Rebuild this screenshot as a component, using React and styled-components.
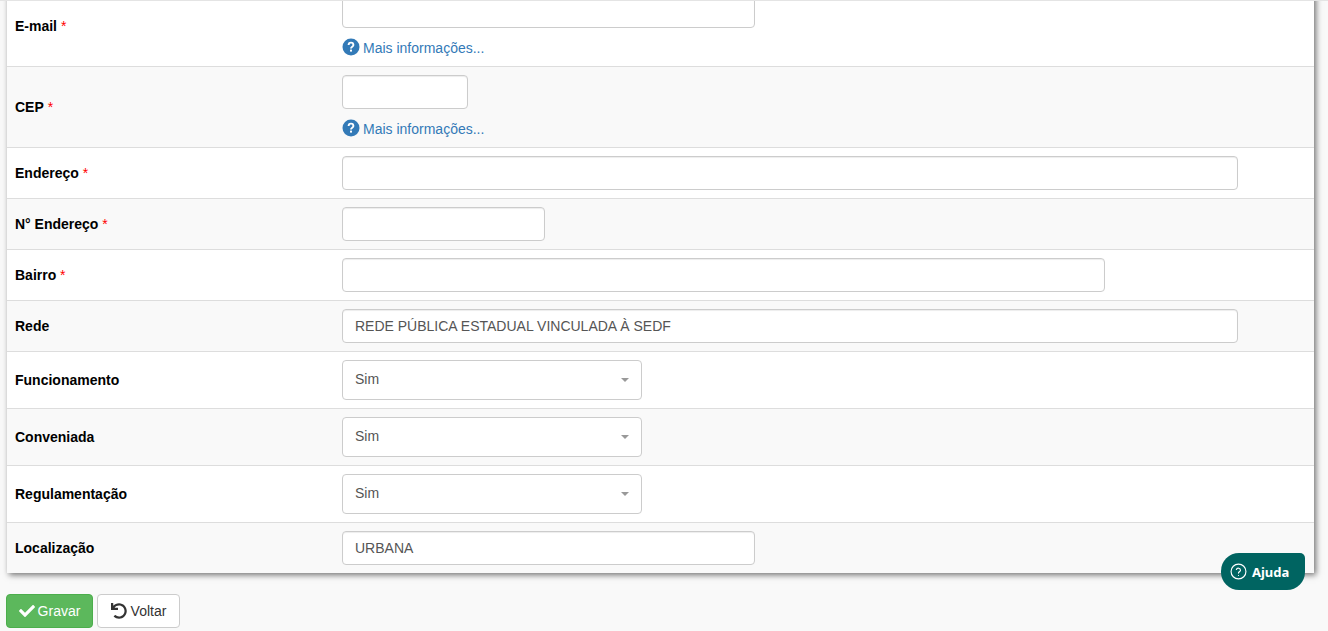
import React from 'react';
import styled, { createGlobalStyle } from 'styled-components';
import { FaCheck, FaUndo } from 'react-icons/fa';

const GlobalStyle = createGlobalStyle`
    html, body {
        margin: 0;
        padding: 0;
        height: 631px;
        overflow: hidden;
        background: #f9f9f9;
    }

    body {
        font-family: 'Liberation Sans', Arial, sans-serif;
        font-size: 14px;
        color: #333;
    }

    * {
        box-sizing: border-box;
    }
`;

const TopEdge = styled.div`
    position: fixed;
    top: 0;
    left: 0;
    right: 0;
    height: 1px;
    background: #e4e4e4;
    z-index: 2;
`;

const Page = styled.div`
    margin-top: -14px;
    padding: 0 14px 0 7px;
`;

const Panel = styled.div`
    background: #fff;
    box-shadow: 2px 2px 6px rgba(0, 0, 0, 0.55);
`;

const Row = styled.div`
    display: grid;
    grid-template-columns: 335px 1fr;
    align-items: center;
    padding: 8px 0;
    border-bottom: 1px solid #ddd;
    background: ${props => props.$striped ? '#f9f9f9' : '#fff'};

    &:last-child {
        border-bottom: 0;
    }
`;

const Label = styled.label`
    padding-left: 8px;
    font-weight: 700;
    font-size: 14px;
    color: #000;
`;

const Required = styled.span`
    color: #f00;
    font-weight: 400;
`;

const Input = styled.input`
    display: block;
    width: ${props => props.$width}px;
    height: 34px;
    padding: 6px 12px;
    border: 1px solid #ccc;
    border-radius: 4px;
    background: #fff;
    color: #555;
    font-family: inherit;
    font-size: 14px;
    box-shadow: inset 0 1px 1px rgba(0, 0, 0, 0.075);
`;

const SelectBox = styled.div`
    display: flex;
    align-items: center;
    justify-content: space-between;
    width: 300px;
    height: 40px;
    padding: 0 12px;
    border: 1px solid #ccc;
    border-radius: 4px;
    background: #fff;
    color: #555;
`;

const SelectValue = styled.span`
    margin-bottom: 2px;
`;

const Caret = styled.span`
    width: 0;
    height: 0;
    border-left: 4.5px solid transparent;
    border-right: 4.5px solid transparent;
    border-top: 4px solid #999;
`;

const HelpLink = styled.a`
    display: flex;
    align-items: center;
    gap: 3px;
    margin-top: 9px;
    height: 21px;
    color: #337ab7;
    font-size: 14px;
    text-decoration: none;

    & svg {
        margin-top: -2px;
    }
`;

const Actions = styled.div`
    display: flex;
    gap: 4px;
    margin-top: 21px;
    margin-left: -1px;
`;

const Button = styled.button`
    display: flex;
    align-items: center;
    justify-content: center;
    gap: ${props => props.$primary ? 3 : 4}px;
    width: ${props => props.$width}px;
    height: 34px;
    padding: 0;
    border: 1px solid ${props => props.$primary ? '#4cae4c' : '#ccc'};
    border-radius: 4px;
    background: ${props => props.$primary ? '#5cb85c' : '#fff'};
    color: ${props => props.$primary ? '#fff' : '#333'};
    font-family: inherit;
    font-size: 14px;

    & svg {
        width: 16px;
        height: 16px;
    }
`;

const HelpBubble = styled.div`
    position: fixed;
    left: 1221px;
    top: 553px;
    display: flex;
    align-items: center;
    gap: 5px;
    width: 84px;
    height: 37px;
    padding-left: 9px;
    border-radius: 18px 5px 18px 18px;
    background: #006461;
    color: #fff;
    font-family: 'Noto Sans', sans-serif;
    font-size: 13px;
    font-weight: 700;
`;

const HelpIcon = () => (
    <svg width="18" height="18" viewBox="0 0 18 18">
        <circle cx="9" cy="9" r="8.5" fill="#337ab7" />
        <path d="M6.6 7a2.4 2.4 0 0 1 4.8 0c0 1.7-2.4 1.7-2.4 3.4" fill="none" stroke="#fff" strokeWidth="1.9" />
        <rect x="8" y="11.6" width="2" height="2" fill="#fff" />
    </svg>
);

const fields = [
    { label: 'E-mail', required: true, width: 413, help: true },
    { label: 'CEP', required: true, width: 126, help: true },
    { label: 'Endereço', required: true, width: 896 },
    { label: 'N° Endereço', required: true, width: 203 },
    { label: 'Bairro', required: true, width: 763 },
    { label: 'Rede', width: 896, value: 'REDE PÚBLICA ESTADUAL VINCULADA À SEDF' },
    { label: 'Funcionamento', select: 'Sim' },
    { label: 'Conveniada', select: 'Sim' },
    { label: 'Regulamentação', select: 'Sim' },
    { label: 'Localização', width: 413, value: 'URBANA' },
];

const App = () => (
    <>
        <GlobalStyle />
        <TopEdge />
        <Page>
            <Panel>
                {fields.map((field, i) => (
                    <Row key={field.label} $striped={i % 2 === 1}>
                        <Label>
                            {field.label}
                            {field.required && <Required> *</Required>}
                        </Label>
                        <div>
                            {field.select ? (
                                <SelectBox><SelectValue>{field.select}</SelectValue><Caret /></SelectBox>
                            ) : (
                                <Input $width={field.width} defaultValue={field.value || ''} readOnly />
                            )}
                            {field.help && (
                                <HelpLink href="#info"><HelpIcon />Mais informações...</HelpLink>
                            )}
                        </div>
                    </Row>
                ))}
            </Panel>
            <Actions>
                <Button $primary $width={87}><FaCheck />Gravar</Button>
                <Button $width={83}><FaUndo />Voltar</Button>
            </Actions>
        </Page>
        <HelpBubble>
            <svg width="17" height="17" viewBox="0 0 24 24" fill="none" stroke="#fff" strokeWidth="1.6" strokeLinecap="round">
                <circle cx="12" cy="12" r="10.5" />
                <path d="M9 9.2a3 3 0 0 1 5.8 1c0 2-2.8 2.4-2.8 4" />
                <path d="M12 17.6v.1" />
            </svg>
            Ajuda
        </HelpBubble>
    </>
);

export default App;
